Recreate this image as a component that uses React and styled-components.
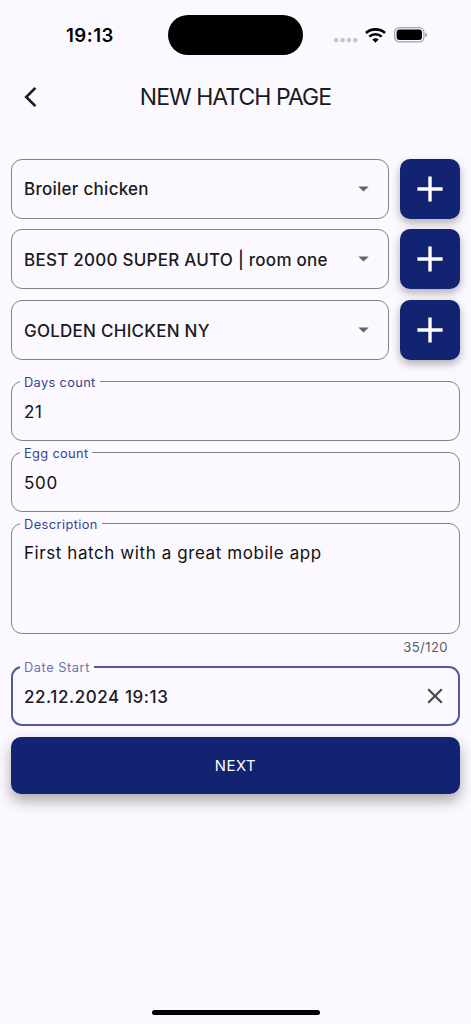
import styled, { createGlobalStyle } from "styled-components";

const GlobalStyle = createGlobalStyle`
  * {
    box-sizing: border-box;
  }
  body {
    margin: 0;
    background-color: #fbf8ff;
    font-family: Inter, "Liberation Sans", sans-serif;
  }
`;

const Screen = styled.div`
  display: flex;
  flex-direction: column;
  height: 1024px;
  overflow: hidden;
  background-color: #fbf8ff;
  color: #1a1b21;
`;

const StatusBar = styled.div`
  display: grid;
  grid-template-columns: 168px 135px 1fr;
  align-items: center;
  height: 70px;
`;

const Time = styled.span`
  padding-left: 66px;
  font-size: 18.6px;
  line-height: 22px;
  font-weight: 600;
  letter-spacing: ${({ $spacing }) => $spacing};
  color: #000;
`;

const Island = styled.div`
  height: 40px;
  border-radius: 20px;
  background-color: #000;
`;

const StatusIcons = styled.div`
  display: flex;
  align-items: center;
  gap: 7.3px;
  padding-left: 30px;
`;

const Header = styled.header`
  display: grid;
  grid-template-columns: 61px 1fr 61px;
  align-items: center;
  height: 54px;
`;

const BackButton = styled.button`
  display: flex;
  justify-content: center;
  padding: 0;
  border: none;
  background: none;
`;

const Title = styled.h1`
  margin: 0;
  font-size: 23px;
  line-height: 30px;
  font-weight: 400;
  letter-spacing: ${({ $spacing }) => $spacing};
  text-align: center;
  white-space: nowrap;
`;

const Form = styled.form`
  display: flex;
  flex-direction: column;
  gap: 10.7px;
  padding: 34.7px 11px 0;
`;

const Row = styled.div`
  display: flex;
  gap: 11px;
`;

const Select = styled.div`
  display: flex;
  flex: 1;
  align-items: center;
  justify-content: space-between;
  height: 60px;
  padding: 0 19px 0 12px;
  border: 1.2px solid #83828a;
  border-radius: 11px;
`;

const Value = styled.span`
  padding-top: 1.6px;
  font-size: 17px;
  line-height: 24px;
  font-weight: ${({ $weight }) => $weight || 400};
  letter-spacing: ${({ $spacing }) => $spacing};
  color: ${({ $color }) => $color || "#1a1b21"};
  white-space: nowrap;
`;

const AddButton = styled.button`
  display: flex;
  align-items: center;
  justify-content: center;
  width: 60px;
  height: 60px;
  padding: 0;
  border: none;
  border-radius: 10px;
  background-color: #112371;
  box-shadow: 0 4px 8px rgba(0, 0, 0, 0.3);
`;

const Fields = styled.div`
  display: flex;
  flex-direction: column;
  gap: 11px;
  padding-top: 10.6px;
`;

const Field = styled.div`
  position: relative;
  display: flex;
  align-items: ${({ $tall }) => ($tall ? "flex-start" : "center")};
  justify-content: space-between;
  height: ${({ $tall }) => ($tall ? "111px" : "60px")};
  padding: ${({ $tall }) => ($tall ? "15.4px 12px" : "0 12px")};
  border: ${({ $focused }) =>
    $focused ? "2px solid #505c98" : "1.2px solid #83828a"};
  border-radius: 11px;
  /* the thicker border takes its pixel from the padding */
  ${({ $focused }) => $focused && "padding: 0 11px;"}
`;

const Label = styled.label`
  position: absolute;
  top: ${({ $focused }) => ($focused ? "-8px" : "-7px")};
  left: ${({ $focused }) => ($focused ? "7px" : "8px")};
  padding: 0 4px;
  background-color: #fbf8ff;
  font-size: 12.8px;
  line-height: 16px;
  letter-spacing: ${({ $spacing }) => $spacing};
  color: ${({ $focused }) => ($focused ? "#6b75ab" : "#33458d")};
  white-space: nowrap;
`;

const Counter = styled.span`
  align-self: flex-end;
  height: 16px;
  padding: 0 12px 0 0;
  margin-top: -6px;
  font-size: 13.1px;
  line-height: 16px;
  letter-spacing: ${({ $spacing }) => $spacing};
  color: #5b5c64;
`;

const ClearButton = styled.button`
  display: flex;
  padding: 0;
  margin-right: 4.5px;
  border: none;
  background: none;
`;

const NextButton = styled.button`
  height: 57px;
  padding: 0;
  border: none;
  border-radius: 10px;
  background-color: #112371;
  box-shadow: 0 7px 14px rgba(0, 0, 0, 0.32);
  color: #fff;
  font-family: inherit;
  font-size: 14.8px;
  font-weight: 400;
  letter-spacing: ${({ $spacing }) => $spacing};
`;

const HomeIndicator = styled.div`
  align-self: center;
  width: 168px;
  height: 5px;
  margin: auto 0 9px;
  border-radius: 3px;
  background-color: #000;
`;

const selects = [
  { value: "Broiler chicken", spacing: "0.27px" },
  { value: "BEST 2000 SUPER AUTO | room one", spacing: "0.25px" },
  { value: "GOLDEN CHICKEN NY", spacing: "0.25px" },
];

function SignalDots() {
  return (
    <svg width="25" height="16" viewBox="0 0 25 16" fill="#c7c5cb">
      <rect x="1" y="11" width="4.2" height="4.2" rx="1.5" />
      <rect x="7.4" y="11" width="4.2" height="4.2" rx="1.5" />
      <rect x="13.8" y="11" width="4.2" height="4.2" rx="1.5" />
      <rect x="20.2" y="11" width="4.2" height="4.2" rx="1.5" />
    </svg>
  );
}

function Wifi() {
  return (
    <svg width="21" height="15" viewBox="0 0 21 15" fill="none" stroke="#000">
      <path d="M1 5.1C6.2 0.2 14.8 0.2 20 5.1" strokeWidth="2.7" />
      <path d="M4.3 8.6C7.8 5.4 13.2 5.4 16.7 8.6" strokeWidth="2.5" />
      <path
        d="M7.4 11.5C9.1 9.9 11.9 9.9 13.6 11.5L10.5 14.7Z"
        fill="#000"
        stroke="none"
      />
    </svg>
  );
}

function Battery() {
  return (
    <svg width="34" height="16" viewBox="0 0 34 16">
      <rect
        x="0.7"
        y="0.7"
        width="29.2"
        height="14.2"
        rx="4.6"
        fill="none"
        stroke="#a3a1a7"
        strokeWidth="1.2"
      />
      <rect x="2.6" y="2.6" width="25.4" height="10.4" rx="3" fill="#000" />
      <path d="M31.2 5.4Q33 6.2 33 7.8T31.2 10.2Z" fill="#9b999f" />
    </svg>
  );
}

function Caret() {
  return (
    <svg width="11" height="6" viewBox="0 0 11 6">
      <path d="M0.3 0.4H10.7L5.5 5.6Z" fill="#65646a" />
    </svg>
  );
}

function Plus() {
  return (
    <svg width="26" height="26" viewBox="0 0 26 26">
      <path d="M13 0.4V25.6M0.4 13H25.6" stroke="#fff" strokeWidth="3.4" />
    </svg>
  );
}

function App() {
  return (
    <Screen>
      <GlobalStyle />
      <StatusBar>
        <Time $spacing="0.5px">19:13</Time>
        <Island />
        <StatusIcons>
          <SignalDots />
          <Wifi />
          <Battery />
        </StatusIcons>
      </StatusBar>

      <Header>
        <BackButton type="button" aria-label="Back">
          <svg width="14" height="22" viewBox="0 0 14 22" fill="none">
            <path
              d="M11.4 1.8L2.2 11L11.4 20.2"
              stroke="#1a1b21"
              strokeWidth="2.6"
            />
          </svg>
        </BackButton>
        <Title $spacing="-0.97px">NEW HATCH PAGE</Title>
      </Header>

      <Form>
        {selects.map(({ value, spacing }) => (
          <Row key={value}>
            <Select>
              <Value $weight={500} $spacing={spacing}>
                {value}
              </Value>
              <Caret />
            </Select>
            <AddButton type="button" aria-label="Add">
              <Plus />
            </AddButton>
          </Row>
        ))}

        <Fields>
          <Field>
            <Label $spacing="0.35px">Days count</Label>
            <Value $color="#111" $spacing="0.7px">
              21
            </Value>
          </Field>
          <Field>
            <Label $spacing="0.35px">Egg count</Label>
            <Value $color="#111" $spacing="0.7px">
              500
            </Value>
          </Field>
          <Field $tall>
            <Label $spacing="0.42px">Description</Label>
            <Value $color="#111" $spacing="0.58px">
              First hatch with a great mobile app
            </Value>
          </Field>
          <Counter $spacing="0.4px">35/120</Counter>
          <Field $focused>
            <Label $focused $spacing="0.55px">
              Date Start
            </Label>
            <Value $weight={500} $spacing="0.57px">
              22.12.2024 19:13
            </Value>
            <ClearButton type="button" aria-label="Clear">
              <svg width="16" height="16" viewBox="0 0 16 16" fill="none">
                <path
                  d="M1.2 1.2L14.8 14.8M14.8 1.2L1.2 14.8"
                  stroke="#45464f"
                  strokeWidth="2.1"
                />
              </svg>
            </ClearButton>
          </Field>
          <NextButton type="button" $spacing="0.6px">
            NEXT
          </NextButton>
        </Fields>
      </Form>

      <HomeIndicator />
    </Screen>
  );
}

export default App;
